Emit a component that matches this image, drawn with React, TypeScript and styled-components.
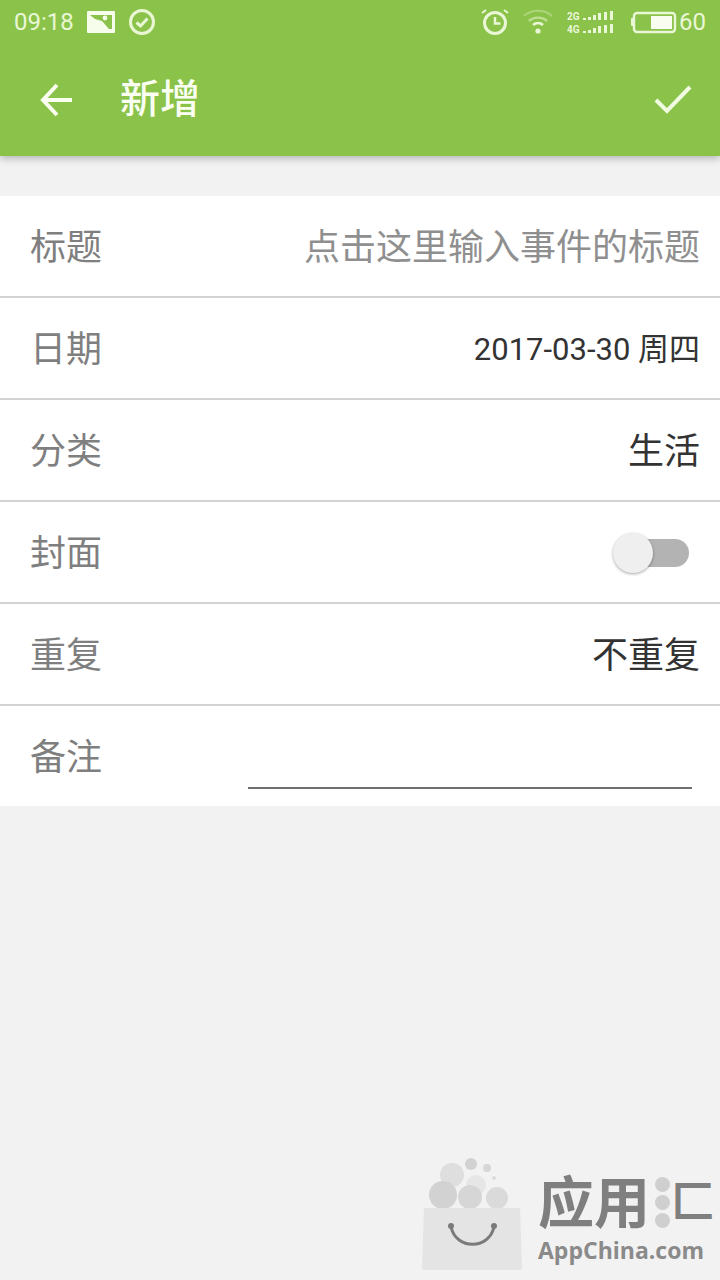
import React, { useState } from 'react';
import styled, { createGlobalStyle } from 'styled-components';

const GlobalStyle = createGlobalStyle`
  html, body {
    margin: 0;
    padding: 0;
    background: #f2f2f2;
  }
  * {
    box-sizing: border-box;
  }
`;

const Page = styled.div`
  position: relative;
  width: 720px;
  height: 1280px;
  overflow: hidden;
  background: #f2f2f2;
  font-family: 'Roboto', 'Noto Sans CJK SC', sans-serif;
`;

const Header = styled.header`
  height: 156px;
  background: #8bc34a;
  box-shadow: 0 2px 8px rgba(0, 0, 0, 0.28);
  display: flex;
  flex-direction: column;
`;

const StatusBar = styled.div`
  height: 44px;
  padding: 0 14px;
  display: flex;
  align-items: center;
  justify-content: space-between;
  color: #f1fbe2;
`;

const StatusGroup = styled.div<{ $gap: number }>`
  display: flex;
  align-items: center;
  gap: ${({ $gap }) => $gap}px;
`;

const StatusText = styled.span`
  font-size: 24px;
  line-height: 28px;
  color: #eaf7d6;
`;

const Toolbar = styled.div`
  flex: 1;
  padding: 0 28px 0 40px;
  display: flex;
  align-items: center;
  margin-top: -1px;
`;

const Title = styled.h1`
  margin: 0 0 0 48px;
  padding-bottom: 7px;
  flex: 1;
  font-size: 40px;
  font-weight: 500;
  color: #fafff2;
`;

const IconButton = styled.button`
  padding: 0;
  border: 0;
  background: none;
  display: flex;
`;

const Form = styled.div`
  margin-top: 40px;
  background: #fff;
`;

const Row = styled.div<{ $last?: boolean }>`
  height: ${({ $last }) => ($last ? 100 : 102)}px;
  padding: 0 20px 4px 30px;
  display: flex;
  align-items: center;
  justify-content: space-between;
  border-bottom: ${({ $last }) => ($last ? 'none' : '2px solid #d2d2d2')};
`;

const Label = styled.span`
  font-size: 36px;
  color: #7f7f7f;
`;

const Value = styled.span<{ $size?: number; $muted?: boolean }>`
  font-size: ${({ $size }) => $size ?? 36}px;
  color: ${({ $muted }) => ($muted ? '#8f8f8f' : '#333')};
`;

const Switch = styled.button`
  position: relative;
  width: 76px;
  height: 40px;
  margin: 6px 11px 0 0;
  padding: 0;
  border: 0;
  background: none;
`;

const SwitchTrack = styled.span`
  position: absolute;
  left: 8px;
  right: 0;
  top: 6px;
  height: 28px;
  border-radius: 14px;
  background: #b3b3b3;
`;

const SwitchThumb = styled.span`
  position: absolute;
  left: 0;
  top: 0;
  width: 40px;
  height: 40px;
  border-radius: 50%;
  background: #efefef;
  box-shadow: 0 1px 3px rgba(0, 0, 0, 0.35);
`;

const NoteInput = styled.div`
  width: 444px;
  height: 2px;
  margin: 68px 8px 0 0;
  background: #6f6f6f;
`;

const Watermark = styled.div`
  position: absolute;
  right: 2px;
  bottom: 10px;
  width: 296px;
  display: flex;
  align-items: flex-end;
`;

const BagWrap = styled.div`
  flex: none;
  display: flex;
`;

const BrandColumn = styled.div`
  margin: 0 0 7px 16px;
  flex: none;
  display: flex;
  flex-direction: column;
  align-items: flex-start;
`;

const BrandName = styled.div`
  margin-bottom: 9px;
  display: flex;
  align-items: center;
  white-space: nowrap;
  font-family: 'Noto Sans CJK SC', sans-serif;
  font-size: 56px;
  line-height: 52px;
  font-weight: 700;
  color: #7f7f7f;
`;

const BrandDots = styled.span`
  width: 16px;
  margin: 8px 0 0 5px;
  display: flex;
  flex-direction: column;
  gap: 3px;
`;

const BrandDot = styled.span`
  width: 15px;
  height: 15px;
  border-radius: 50%;
  background: #cfcfcf;
`;

const BrandLast = styled.span`
  font-size: 44px;
`;

const BrandSite = styled.div`
  font-family: 'Open Sans', sans-serif;
  font-size: 23px;
  line-height: 26px;
  font-weight: 700;
  color: #8a8a8a;
  white-space: nowrap;
`;

const PictureIcon = () => (
  <svg width="28" height="22" viewBox="0 0 28 22">
    <rect width="28" height="22" rx="1" fill="#f6fdea" />
    <path d="M3 4 H25 V18 H22 L15 10 L8 8 Z" fill="#8bc34a" />
    <circle cx="18" cy="7" r="2.4" fill="#f6fdea" />
  </svg>
);

const CheckCircleIcon = () => (
  <svg width="28" height="28" viewBox="0 0 28 28" fill="none" stroke="#eaf7d6">
    <circle cx="14" cy="14" r="11.5" strokeWidth="3" />
    <path d="M8.5 14.5 L12.5 18 L19.5 10.5" strokeWidth="3" />
  </svg>
);

const AlarmIcon = () => (
  <svg width="28" height="28" viewBox="0 0 28 28" fill="none" stroke="#eaf7d6" strokeWidth="3">
    <circle cx="14" cy="15" r="10.5" />
    <path d="M14 9 V15.5 H19.5" strokeWidth="2.5" />
    <path d="M1 5 L5 2 M27 5 L23 2" strokeWidth="2" />
  </svg>
);

const WifiIcon = () => (
  <svg width="30" height="26" viewBox="0 0 30 26" fill="none" stroke="#eaf7d6">
    <path d="M1 7 C9 0 21 0 29 7" strokeWidth="2" opacity="0.35" />
    <path d="M6 12 C11 7.5 19 7.5 24 12" strokeWidth="2.4" opacity="0.55" />
    <path d="M10 16 C13 13.5 17 13.5 20 16" strokeWidth="2.6" />
    <circle cx="15" cy="22" r="2.6" fill="#eaf7d6" stroke="none" />
  </svg>
);

const signalBars = [
  { x: 16, h: 2 },
  { x: 21, h: 3 },
  { x: 26, h: 5 },
  { x: 31, h: 7 },
  { x: 37, h: 8 },
  { x: 43, h: 9 },
];

const SignalIcon = () => (
  <svg width="50" height="26" viewBox="0 0 50 26" fill="#eaf7d6">
    <text x="0" y="11" fontSize="10" fontWeight="700" fontFamily="Roboto, sans-serif">
      2G
    </text>
    <text x="0" y="24" fontSize="10" fontWeight="700" fontFamily="Roboto, sans-serif">
      4G
    </text>
    {signalBars.map(bar => (
      <React.Fragment key={bar.x}>
        <rect x={bar.x} y={11 - bar.h} width="3" height={bar.h} />
        <rect x={bar.x} y={24 - bar.h} width="3" height={bar.h} />
      </React.Fragment>
    ))}
  </svg>
);

const BatteryIcon = () => (
  <svg width="46" height="24" viewBox="0 0 46 24">
    <rect x="0" y="8" width="3" height="8" rx="1" fill="#eaf7d6" />
    <rect x="3" y="3" width="41" height="19" rx="3" fill="none" stroke="#eaf7d6" strokeWidth="2.4" />
    <rect x="20" y="6" width="21" height="13" fill="#f8fdf0" />
  </svg>
);

const BackIcon = () => (
  <svg width="32" height="34" viewBox="0 0 32 34" fill="none" stroke="#fafff2" strokeWidth="4">
    <path d="M32 17 H4" />
    <path d="M17 2 L3 17 L17 32" />
  </svg>
);

const CheckIcon = () => (
  <svg width="38" height="30" viewBox="0 0 38 30" fill="none" stroke="#f1fbe2" strokeWidth="4">
    <path d="M2 15 L13 26 L36 2" />
  </svg>
);

const BagLogo = () => (
  <svg width="100" height="112" viewBox="0 0 100 112">
    <circle cx="49" cy="6" r="6" fill="#d2d2d2" />
    <circle cx="65" cy="10" r="4" fill="#d6d6d6" />
    <circle cx="72" cy="20" r="2" fill="#dcdcdc" />
    <circle cx="30" cy="17" r="12" fill="#dedede" />
    <circle cx="54" cy="27" r="10" fill="#e6e6e6" />
    <circle cx="21" cy="37" r="14" fill="#d2d2d2" />
    <circle cx="48" cy="39" r="12" fill="#d6d6d6" />
    <circle cx="75" cy="40" r="11" fill="#dadada" />
    <path d="M2 50 H98 L100 109 Q100 112 97 112 H3 Q0 112 0 109 Z" fill="#e4e4e4" />
    <path d="M29 69 C34 92 67 92 72 69" fill="none" stroke="#7a7a7a" strokeWidth="3" />
    <circle cx="29" cy="68" r="3" fill="#7a7a7a" />
    <circle cx="72" cy="68" r="3" fill="#7a7a7a" />
  </svg>
);

const App: React.FunctionComponent = () => {
  const [cover, setCover] = useState(false);
  return (
    <Page>
      <GlobalStyle />
      <Header>
        <StatusBar>
          <StatusGroup $gap={13}>
            <StatusText>09:18</StatusText>
            <PictureIcon />
            <CheckCircleIcon />
          </StatusGroup>
          <StatusGroup $gap={14}>
            <AlarmIcon />
            <WifiIcon />
            <SignalIcon />
            <StatusGroup $gap={2}>
              <BatteryIcon />
              <StatusText>60</StatusText>
            </StatusGroup>
          </StatusGroup>
        </StatusBar>
        <Toolbar>
          <IconButton>
            <BackIcon />
          </IconButton>
          <Title>新增</Title>
          <IconButton>
            <CheckIcon />
          </IconButton>
        </Toolbar>
      </Header>
      <Form>
        <Row>
          <Label>标题</Label>
          <Value $muted>点击这里输入事件的标题</Value>
        </Row>
        <Row>
          <Label>日期</Label>
          <Value $size={31}>2017-03-30 周四</Value>
        </Row>
        <Row>
          <Label>分类</Label>
          <Value>生活</Value>
        </Row>
        <Row>
          <Label>封面</Label>
          <Switch onClick={() => setCover(!cover)}>
            <SwitchTrack />
            <SwitchThumb />
          </Switch>
        </Row>
        <Row>
          <Label>重复</Label>
          <Value>不重复</Value>
        </Row>
        <Row $last>
          <Label>备注</Label>
          <NoteInput />
        </Row>
      </Form>
      <Watermark>
        <BagWrap>
          <BagLogo />
        </BagWrap>
        <BrandColumn>
          <BrandName>
            应用
            <BrandDots>
              <BrandDot />
              <BrandDot />
              <BrandDot />
            </BrandDots>
            <BrandLast>匚</BrandLast>
          </BrandName>
          <BrandSite>AppChina.com</BrandSite>
        </BrandColumn>
      </Watermark>
    </Page>
  );
};

export default App;
